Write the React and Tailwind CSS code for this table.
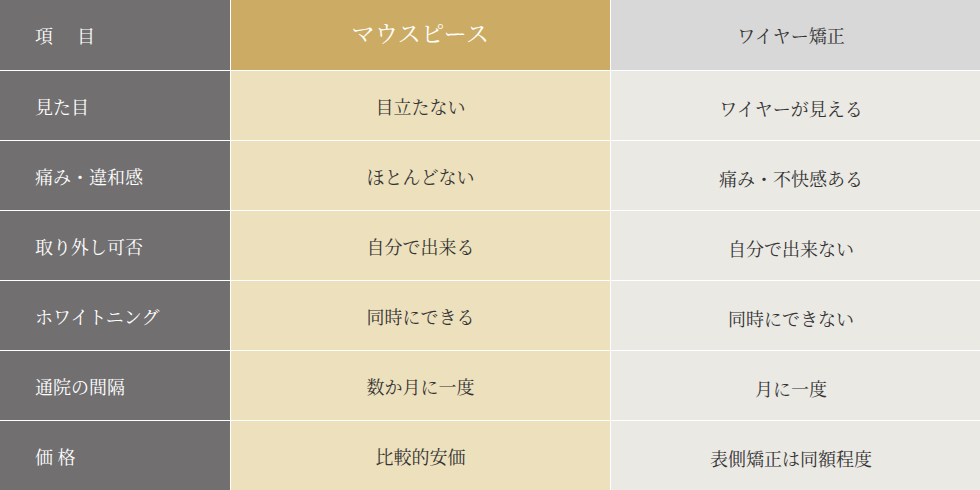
import React from "react";

const rows = [
  ["見た目", "目立たない", "ワイヤーが見える"],
  ["痛み・違和感", "ほとんどない", "痛み・不快感ある"],
  ["取り外し可否", "自分で出来る", "自分で出来ない"],
  ["ホワイトニング", "同時にできる", "同時にできない"],
  ["通院の間隔", "数か月に一度", "月に一度"],
  ["価 格", "比較的安価", "表側矯正は同額程度"],
];

const font = {
  fontFamily:
    '"Noto Serif CJK JP", "Noto Sans CJK JP", "Noto Sans", sans-serif',
};

export default function App() {
  return (
    <div
      className="w-[980px] h-[490px] bg-white grid grid-cols-[230px_379px_369px] grid-rows-[70px_repeat(6,69px)] gap-px"
      style={font}
    >
      <div className="bg-[#716f70] flex items-center pl-[35px] text-white text-[18px] tracking-[3px]">
        項　目
      </div>
      <div className="bg-[#ccac64] flex items-center justify-center pb-[3px] text-white text-[23px] tracking-[0.5px]">
        マウスピース
      </div>
      <div className="bg-[#d8d8d8] flex items-center justify-center pr-[9px] text-[#333] text-[18px]">
        ワイヤー矯正
      </div>
      {rows.map((r, i) => (
        <React.Fragment key={i}>
          <div className="bg-[#716f70] flex items-center pl-[35px] pt-[2px] text-white text-[18px]">
            {r[0]}
          </div>
          <div className="bg-[#ede0bd] flex items-center justify-center pt-[1px] text-[#333] text-[18px]">
            {r[1]}
          </div>
          <div className="bg-[#ebe9e4] flex items-center justify-center pt-[6px] pr-[9px] text-[#333] text-[18px]">
            {r[2]}
          </div>
        </React.Fragment>
      ))}
    </div>
  );
}
